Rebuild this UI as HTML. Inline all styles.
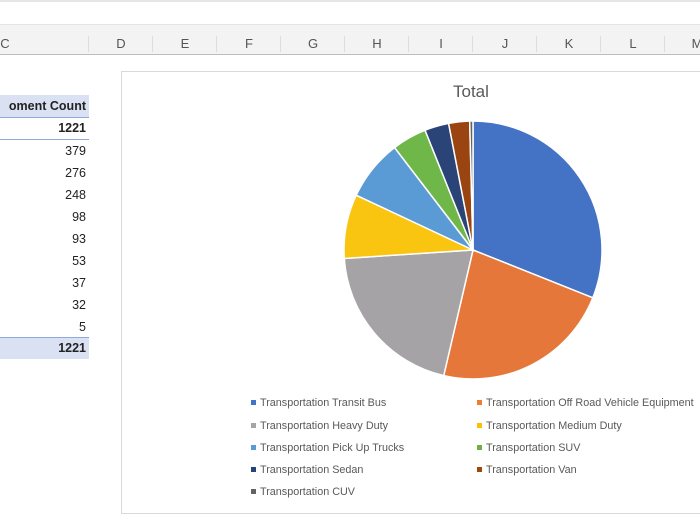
<!DOCTYPE html>
<html><head><meta charset="utf-8"><style>
body{margin:0;width:700px;height:525px;overflow:hidden;background:#fff;font-family:"Liberation Sans",sans-serif;position:relative}
.a{position:absolute}
.hdr{top:33px;height:20px;width:64px;text-align:center;font-size:13px;color:#555;line-height:22px}
.num{right:614px;font-size:12.5px;color:#222;text-align:right}
.lg{font-size:10.8px;color:#595959;position:absolute;white-space:nowrap}
.lg i{display:inline-block;width:5px;height:5px;margin-right:4px;vertical-align:1px}
</style></head><body>
<div class="a" style="left:0;top:0;width:700px;height:2px;background:#e6e6e6"></div>
<div class="a" style="left:0;top:24px;width:700px;height:29px;background:#f3f3f3;border-top:1px solid #e4e4e4;border-bottom:1px solid #bdbdbd"></div>
<div class="a hdr" style="left:-27px">C</div>
<div class="a hdr" style="left:89px">D</div>
<div class="a hdr" style="left:153px">E</div>
<div class="a hdr" style="left:217px">F</div>
<div class="a hdr" style="left:281px">G</div>
<div class="a hdr" style="left:345px">H</div>
<div class="a hdr" style="left:409px">I</div>
<div class="a hdr" style="left:473px">J</div>
<div class="a hdr" style="left:537px">K</div>
<div class="a hdr" style="left:601px">L</div>
<div class="a hdr" style="left:665px">M</div>
<div class="a" style="left:88px;top:36px;width:1px;height:16px;background:#ddd"></div>
<div class="a" style="left:152px;top:36px;width:1px;height:16px;background:#ddd"></div>
<div class="a" style="left:216px;top:36px;width:1px;height:16px;background:#ddd"></div>
<div class="a" style="left:280px;top:36px;width:1px;height:16px;background:#ddd"></div>
<div class="a" style="left:344px;top:36px;width:1px;height:16px;background:#ddd"></div>
<div class="a" style="left:408px;top:36px;width:1px;height:16px;background:#ddd"></div>
<div class="a" style="left:472px;top:36px;width:1px;height:16px;background:#ddd"></div>
<div class="a" style="left:536px;top:36px;width:1px;height:16px;background:#ddd"></div>
<div class="a" style="left:600px;top:36px;width:1px;height:16px;background:#ddd"></div>
<div class="a" style="left:664px;top:36px;width:1px;height:16px;background:#ddd"></div>

<div class="a" style="left:0;top:95px;width:89px;height:22px;background:#d9e1f2;border-bottom:1px solid #8ea9db"></div>
<div class="a" style="right:614px;top:99px;font-size:12.5px;font-weight:bold;color:#222;white-space:nowrap">oment Count</div>
<div class="a num" style="top:121px;font-weight:bold">1221</div>
<div class="a" style="left:0;top:139px;width:89px;height:1px;background:#8ea9db"></div>
<div class="a num" style="top:144px">379</div>
<div class="a num" style="top:166px">276</div>
<div class="a num" style="top:188px">248</div>
<div class="a num" style="top:210px">98</div>
<div class="a num" style="top:232px">93</div>
<div class="a num" style="top:254px">53</div>
<div class="a num" style="top:276px">37</div>
<div class="a num" style="top:298px">32</div>
<div class="a num" style="top:320px">5</div>
<div class="a" style="left:0;top:337px;width:89px;height:21px;background:#d9e1f2;border-top:1px solid #8ea9db"></div>
<div class="a num" style="top:341px;font-weight:bold">1221</div>

<div class="a" style="left:121px;top:71px;width:590px;height:441px;border:1px solid #d9d9d9;background:#fff"></div>
<div class="a" style="left:453px;top:82px;font-size:17px;color:#595959">Total</div>
<svg class="a" style="left:0;top:0" width="700" height="525" id="pie"></svg>
<div class="lg" style="left:251px;top:397px"><i style="background:#4472c4"></i>Transportation Transit Bus</div>
<div class="lg" style="left:477px;top:397px"><i style="background:#ed7d31"></i>Transportation Off Road Vehicle Equipment</div>
<div class="lg" style="left:251px;top:420px"><i style="background:#a5a5a5"></i>Transportation Heavy Duty</div>
<div class="lg" style="left:477px;top:420px"><i style="background:#ffc000"></i>Transportation Medium Duty</div>
<div class="lg" style="left:251px;top:442px"><i style="background:#5b9bd5"></i>Transportation Pick Up Trucks</div>
<div class="lg" style="left:477px;top:442px"><i style="background:#70ad47"></i>Transportation SUV</div>
<div class="lg" style="left:251px;top:464px"><i style="background:#264478"></i>Transportation Sedan</div>
<div class="lg" style="left:477px;top:464px"><i style="background:#9e480e"></i>Transportation Van</div>
<div class="lg" style="left:251px;top:486px"><i style="background:#636363"></i>Transportation CUV</div>
<script>
var v=[379,276,248,98,93,53,37,32,5],c=["#4472c4","#e5773a","#a5a3a5","#f9c510","#5b9bd5","#70b74a","#2a4478","#9a4412","#636363"];
var cx=473,cy=250,r=129,a=0,s="";
for(var i=0;i<v.length;i++){var b=a+v[i]/1221*2*Math.PI;
var x1=cx+r*Math.sin(a),y1=cy-r*Math.cos(a),x2=cx+r*Math.sin(b),y2=cy-r*Math.cos(b);
s+='<path d="M'+cx+' '+cy+' L'+x1+' '+y1+' A'+r+' '+r+' 0 '+(b-a>Math.PI?1:0)+' 1 '+x2+' '+y2+' Z" fill="'+c[i]+'" stroke="#fff" stroke-width="1.5"/>';a=b;}
document.getElementById("pie").innerHTML=s;
</script>
</body></html>
